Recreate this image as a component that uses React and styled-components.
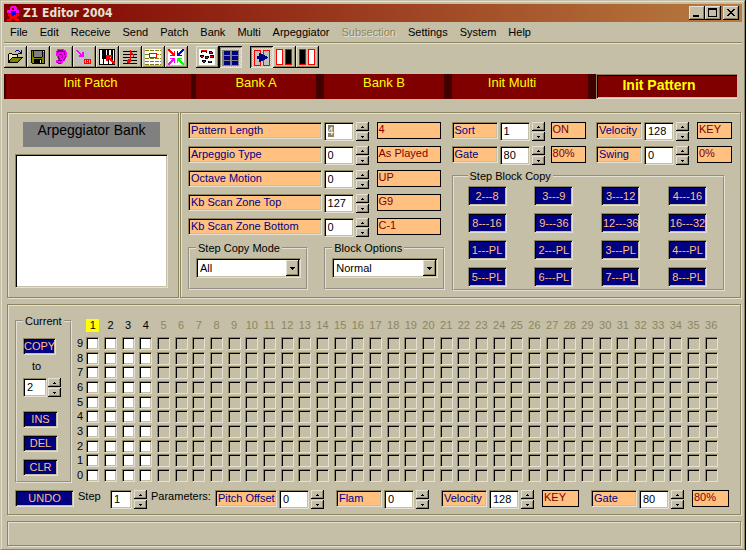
/**
 *
 * Z1 Editor - arpeggio pattern page
 *
 */

import React, { useEffect, useRef, useState } from 'react';
import styled, { createGlobalStyle, css } from 'styled-components';

const face = '#c4bfa6';
const light = '#e4e1d2';
const shadow = '#8c8660';
const peach = '#ffc080';
const navy = '#000080';
const maroon = '#800000';

const GlobalStyle = createGlobalStyle`
  * {
    box-sizing: border-box;
  }
  body {
    margin: 0;
    background: ${face};
    font-family: 'Liberation Sans', Arial, sans-serif;
    font-size: 11px;
    line-height: 13px;
    color: #000;
  }
  button, input, select {
    font: inherit;
    color: inherit;
    margin: 0;
    padding: 0;
    border: 0;
    border-radius: 0;
    outline: none;
  }
`;

const sunken = css`
  border: 1px solid;
  border-color: ${shadow} ${light} ${light} ${shadow};
  box-shadow: inset 1px 1px 0 #000, inset -1px -1px 0 ${face};
`;

const raised = css`
  background: ${face};
  box-shadow: inset -1px -1px 0 #000, inset 1px 1px 0 ${light},
    inset -2px -2px 0 ${shadow};
`;

const Window = styled.main`
  display: flex;
  flex-direction: column;
  min-height: 100vh;
  padding: 4px 4px 5px;
  background: ${face};
  box-shadow: inset -1px -1px 0 #000, inset 1px 1px 0 ${face},
    inset -2px -2px 0 ${shadow}, inset 2px 2px 0 ${light};
`;

const TitleBar = styled.header`
  display: flex;
  align-items: center;
  height: 18px;
  padding: 0 3px 0 2px;
  background: linear-gradient(to right, ${maroon}, #b87c40);
`;

const Title = styled.h1`
  flex: 1;
  margin: 0 0 0 3px;
  font: bold 12px/18px 'DejaVu Sans Condensed', 'DejaVu Sans', sans-serif;
  color: ${light};
`;

const WindowButton = styled.button`
  ${raised}
  width: 16px;
  height: 14px;
  margin-left: ${props => (props.$apart ? 2 : 0)}px;
  svg {
    display: block;
  }
`;

const MenuBar = styled.nav`
  display: flex;
  height: 22px;
  border-bottom: 1px solid ${light};
  box-shadow: inset 0 -1px 0 ${shadow};
`;

const MenuItem = styled.button`
  height: 20px;
  padding: 0 6px;
  background: none;
  &:disabled {
    color: ${shadow};
    text-shadow: 1px 1px 0 ${light};
  }
`;

const Toolbar = styled.div`
  display: flex;
  gap: 8px;
  padding: 2px 0 6px;
`;

const ToolGroup = styled.div`
  display: flex;
`;

const ToolButton = styled.button`
  ${raised}
  width: 23px;
  height: 22px;
  ${props =>
    props.$pressed &&
    css`
      background: repeating-conic-gradient(${light} 0 25%, ${face} 0 50%) 0 0 /
        2px 2px;
      box-shadow: inset 1px 1px 0 #000, inset -1px -1px 0 ${light},
        inset 2px 2px 0 ${shadow};
    `}
  svg {
    display: block;
  }
`;

const Tabs = styled.div`
  display: grid;
  grid-template-columns: 190fr 128fr 128fr 144fr 141fr;
  height: 25px;
  margin-right: 5px;
  padding-left: 2px;
  background: #400000;
`;

const Tab = styled.button`
  padding: 0 ${props => (props.$wide ? 16 : 0)}px 8px 0;
  font-size: 13px;
  line-height: 17px;
  color: #ff0;
  background: ${maroon};
  border-right: ${props => props.$edge || 8}px solid #400000;
  ${props =>
    props.$active &&
    css`
      padding-bottom: 2px;
      font-size: 14px;
      font-weight: bold;
      border: solid;
      border-width: 1px 0 1px 1px;
      border-color: ${shadow} ${light} ${light} ${shadow};
      box-shadow: inset 1px 1px 0 #000, inset 0 -1px 0 ${face};
    `}
`;

const Page = styled.div`
  display: flex;
  flex: 1;
  flex-direction: column;
  gap: 6px;
  padding: 13px 1px 0 3px;
`;

const TopRow = styled.div`
  display: flex;
  gap: 1px;
`;

const Panel = styled.section`
  border: 1px solid ${shadow};
  box-shadow: 1px 1px 0 ${light}, inset 1px 1px 0 ${light};
`;

const BankPanel = styled(Panel)`
  display: flex;
  flex-direction: column;
  flex: 0 0 172px;
  gap: 7px;
  padding: 9px 10px 9px 7px;
`;

const BankTitle = styled.h2`
  height: 25px;
  margin: 0 8px;
  font-size: 14px;
  font-weight: normal;
  line-height: 17px;
  text-align: center;
  background: #808080;
`;

const BankList = styled.select`
  ${sunken}
  flex: 1;
  background: #fff;
`;

const PatternPanel = styled(Panel)`
  display: flex;
  flex: 1;
  gap: 7px;
  padding: 9px 8px 6px 7px;
`;

const PatternColumn = styled.div`
  display: flex;
  flex-direction: column;
  flex: 257 1 0;
  gap: 5px;
`;

const FieldList = styled.div`
  display: flex;
  flex-direction: column;
  gap: 5px;
  padding-right: 4px;
`;

const BlockColumn = styled.div`
  display: flex;
  flex-direction: column;
  flex: 281 1 0;
  gap: 5px;
`;

const FieldRow = styled.div`
  display: flex;
  justify-content: space-between;
`;

const FieldBox = styled.div`
  display: flex;
  align-items: flex-start;
  gap: 2px;
`;

const FieldLabel = styled.label`
  ${sunken}
  flex: ${props => (props.$width ? `0 0 ${props.$width}px` : 1)};
  height: 17px;
  padding: 1px 0 0 2px;
  white-space: nowrap;
  color: ${navy};
  background: ${peach};
`;

const NumberInput = styled.input`
  ${sunken}
  width: ${props => props.$width || 30}px;
  height: 19px;
  padding: 0 0 1px 3px;
  background: #fff;
  &::selection {
    color: #fff;
    background: ${shadow};
  }
`;

const Spinner = styled.span`
  display: flex;
  flex-direction: column;
  gap: 1px;
  width: 13px;
`;

const SpinButton = styled.button`
  ${raised}
  height: 9px;
  svg {
    display: block;
    margin: 0 auto;
  }
`;

const Readout = styled.output`
  width: ${props => props.$width}px;
  height: 17px;
  margin-left: ${props => props.$gap}px;
  padding: 0 1px;
  white-space: nowrap;
  color: ${maroon};
  background: ${peach};
  border: 1px solid #000;
`;

const GroupRow = styled.div`
  display: flex;
  gap: 16px;
`;

const Group = styled.fieldset`
  min-width: 0;
  margin: 0;
  padding: ${props => props.$pad};
  border: 2px groove ${light};
`;

const ChoiceGroup = styled(Group)`
  flex: 1;
`;

const BlockGroup = styled(Group)`
  margin-right: 7px;
`;

const Legend = styled.legend`
  height: 12px;
  padding: 0 2px;
  line-height: 12px;
  white-space: nowrap;
`;

const SelectBox = styled.div`
  ${sunken}
  display: flex;
  height: 20px;
  padding: 1px;
  background: #fff;
`;

const Select = styled.select`
  flex: 1;
  min-width: 0;
  padding-left: 2px;
  appearance: none;
  background: #fff;
`;

const SelectArrow = styled.span`
  ${raised}
  display: flex;
  align-items: center;
  justify-content: center;
  width: 13px;
`;

const BlockButtons = styled.div`
  display: grid;
  grid-template-columns: repeat(4, 39px);
  justify-content: space-between;
  row-gap: 7px;
`;

const BlueButton = styled.button`
  ${sunken}
  width: ${props => (props.$width ? `${props.$width}px` : 'auto')};
  height: ${props => props.$height || 17}px;
  line-height: 13px;
  white-space: nowrap;
  color: ${peach};
  background: ${navy};
`;

const StepPanel = styled(Panel)`
  display: flex;
  flex-direction: column;
  gap: 7px;
  min-height: 211px;
  padding: 10px 11px 3px 7px;
`;

const StepArea = styled.div`
  display: flex;
  gap: 4px;
`;

const CurrentGroup = styled(Group)`
  flex: 0 0 57px;
`;

const CurrentStack = styled.div`
  display: flex;
  flex-direction: column;
  align-items: flex-start;
  gap: 7px;
`;

const ToText = styled.span`
  margin: -2px 0 -2px 9px;
`;

const CurrentNumber = styled.div`
  display: flex;
  gap: 1px;
  margin-bottom: 7px;
`;

const StepGrid = styled.div`
  display: grid;
  flex: 1;
  grid-template-columns: 8px repeat(36, 1fr);
  grid-template-rows: 21px repeat(10, 1fr);
  align-items: center;
  justify-items: center;
  margin-right: 9px;
`;

const StepNumber = styled.span`
  min-width: 13px;
  text-align: center;
  color: ${props => (props.$enabled ? '#000' : shadow)};
  background: ${props => (props.$current ? '#ff0' : 'none')};
`;

const StepBox = styled.input`
  ${sunken}
  appearance: none;
  width: 13px;
  height: 13px;
  background: #fff;
  &:checked {
    background: ${navy};
  }
  &:disabled {
    background: ${face};
  }
`;

const ParameterRow = styled.div`
  display: flex;
  align-items: flex-start;
  justify-content: space-between;
`;

const StepParameters = styled.div`
  display: flex;
  align-items: flex-start;
  gap: 4px;
`;

const StepChooser = styled.div`
  display: flex;
  gap: 2px;
`;

const StepLabel = styled.label`
  width: 30px;
`;

const StatusBar = styled.footer`
  height: 25px;
  border: 1px solid ${shadow};
  box-shadow: 1px 1px 0 ${light}, inset 1px 1px 0 ${light};
`;

function Logo() {
  return (
    <svg width="14" height="17" shapeRendering="crispEdges" aria-hidden="true">
      <path
        d="M4 1h6v1h1v3h2v3h-3v-2h-5v2h-4v-3h3v-3h1zM6 3v2h2v-2z"
        fill="#f0f"
        fillRule="evenodd"
      />
      <path d="M5 6h5v2h-1v2h-3v-2h-1z" fill="#00f" />
      <path
        d="M2 9h3v1h1v1h2v-1h2v-1h3v2h-2v1h-1v1h1v1h2v2h-4v-1h-1v-1h-2v1h-1v1h-4v-2h2v-1h1v-1h-1v-1h-1z"
        fill="#f00"
      />
    </svg>
  );
}

function MinimizeIcon() {
  return (
    <svg width="16" height="14" shapeRendering="crispEdges">
      <path d="M4 9h6v2h-6z" />
    </svg>
  );
}

function MaximizeIcon() {
  return (
    <svg width="16" height="14" shapeRendering="crispEdges">
      <path d="M3 2h9v9h-9zM4 4v6h7v-6z" fillRule="evenodd" />
    </svg>
  );
}

function CloseIcon() {
  return (
    <svg width="16" height="14" shapeRendering="crispEdges">
      <path d="M4 3h2v1h1v1h2v-1h1v-1h2v1h-1v1h-1v1h-1v1h1v1h1v1h1v1h-2v-1h-1v-1h-2v1h-1v1h-2v-1h1v-1h1v-1h1v-1h-1v-1h-1v-1h-1z" />
    </svg>
  );
}

function UpIcon() {
  return (
    <svg width="3" height="2" shapeRendering="crispEdges">
      <path d="M1 0h1v1h1v1h-3v-1h1z" />
    </svg>
  );
}

function DownIcon() {
  return (
    <svg width="3" height="2" shapeRendering="crispEdges">
      <path d="M0 0h3v1h-1v1h-1v-1h-1z" />
    </svg>
  );
}

function ToolIcon({ children }) {
  return (
    <svg width="23" height="22" shapeRendering="crispEdges" aria-hidden="true">
      {children}
    </svg>
  );
}

const icons = {
  open: (
    <>
      <path d="M4 8h1v-1h3v1h6v3h5v1h-1v1h-1v1h-1v1h-1v1h-1v1h-10z" />
      <path d="M5 8h3v1h5v2h-5v1h-1v1h-1v1h-1z" fill="#e8e4b0" />
      <path d="M8 12h9v1h-1v1h-1v1h-1v1h-8v-2h1v-1h1z" fill="#808000" />
      <path
        d="M11 5h1v-1h3v1h1v1h1v-2h1v4h-4v-1h2v-1h-1v-1h-3v1h-1z"
        fill={navy}
      />
    </>
  ),
  save: (
    <>
      <path d="M4 4h14v14h-13v-1h-1z" />
      <path d="M5 5h1v6h1v1h8v-1h1v-5h1v11h-2v-4h-8v4h-2z" fill="#808000" />
      <path d="M7 5h8v6h-8z" fill="#808080" />
      <path d="M13 14h1v3h-1z" fill={light} />
      <path d="M16 5h1v1h-1z" fill={light} />
    </>
  ),
  ear: (
    <>
      <path
        d="M7 3h7v1h2v2h1v5h-1v2h-1v2h-2v2h-1v1h-4v-1h-2v-3h2v-2h-1v-2h-1v-5h1z"
        fill="#f0f"
      />
      <path
        d="M7 5h1v-1h5v1h2v4h-1v-3h-6v2h-1zM9 8h3v1h1v3h-2v-1h1v-2h-3zM8 10h1v2h1v2h2v1h-4v-1h1v-1h-1zM15 10h1v2h-1v2h-1v1h-1v-2h1v-1h1z"
        fill="#800080"
      />
      <path d="M7 16h1v1h3v1h-3v-1h-1z" fill={navy} />
    </>
  ),
  receive: (
    <>
      <path d="M3 3h16v16h-16z" fill="#c0c0c0" />
      <path
        d="M3 4h2v1h1v1h1v1h1v1h1v-2h2v5h-5v-2h1v-1h-1v-1h-1v-1h-1v-1h-1z"
        fill="#f0f"
      />
      <path d="M11 13h7v5h-7zM12 14v3h5v-3z" fill="#f00" fillRule="evenodd" />
      <path d="M13 14h1v1h1v-1h1v3h-1v-1h-1v1h-1z" fill="#f00" />
    </>
  ),
  keys: (
    <>
      <path d="M3 3h16v16h-16z" />
      <path
        d="M4 4h2v9h1v5h-3zM8 13h2v-9h1v9h1v5h-4zM13 13v-9h2v9h1v5h-3zM17 4h1v14h-1z"
        fill="#fff"
      />
      <path
        d="M10 9h6v2h-2v1h1v1h1v1h1v1h1v1h1v2h-2v-1h-1v-1h-1v-1h-1v-1h-1v-1h-1v2h-2z"
        fill="#f00"
      />
    </>
  ),
  notes: (
    <>
      <path d="M4 5h14v1h-14zM4 8h14v1h-14zM4 11h14v1h-14zM4 14h14v1h-14zM4 17h14v1h-14z" />
      <path
        d="M11 4h1v2h1v1h1v1h1v3h-1v-2h-1v-1h-1v8h-1v1h-3v-3h1v-1h2z"
        fill="#f00"
      />
    </>
  ),
  sheet: (
    <>
      <path d="M3 3h16v16h-16z" fill="#fff" />
      <path
        d="M3 4h16M3 8h16M3 12h16M3 15h16M3 18h16"
        transform="translate(0 .5)"
        stroke="#808000"
        strokeDasharray="4 1"
      />
      <path d="M7 7h8v5h-8z" fill="#f00" />
      <path d="M8 8h6v3h-6z" fill="#fff" />
    </>
  ),
  center: (
    <>
      <path d="M3 3h16v16h-16z" fill="#fff" />
      <path
        d="M3 3h2v1h1v1h1v1h1v1h1v-2h1v5h-5v-1h2v-1h-1v-1h-1v-1h-1v-1h-1z"
        fill="#f00"
      />
      <path
        d="M19 3h-2v1h-1v1h-1v1h-1v1h-1v-2h-1v5h5v-1h-2v-1h1v-1h1v-1h1v-1h1z"
        fill="#00f"
      />
      <path
        d="M3 19h2v-1h1v-1h1v-1h1v-1h1v2h1v-5h-5v1h2v1h-1v1h-1v1h-1v1h-1z"
        fill="#f0f"
      />
      <path
        d="M19 19h-2v-1h-1v-1h-1v-1h-1v-1h-1v2h-1v-5h5v1h-2v1h1v1h1v1h1v1h1z"
        fill="#0f0"
      />
    </>
  ),
  midi: (
    <>
      <path d="M3 3h16v16h-16z" fill="#fff" />
      <path d="M5 4h6v3h-1v-1h-4v1h-1zM13 5h3v1h1v2h-4zM4 9h4v2h-1v1h-2v-1h-1zM9 10h4v2h-1v1h-3zM14 9h4v3h-4zM6 14h4v2h-1v1h-2v-1h-1zM12 15h4v2h-4z" />
      <path
        d="M5 4h6v1h-6zM5 10h2v1h-2zM14 10h3v1h-3zM7 15h2v1h-2zM13 15h2v1h-2z"
        fill="#f00"
      />
      <path d="M14 6h2v1h-2zM10 11h2v1h-2z" fill="#c000a0" />
    </>
  ),
  bank: (
    <>
      <path d="M3 4h17v16h-17z" fill="#808080" />
      <path
        d="M5 5h6v4h-6zM13 5h6v4h-6zM5 10h6v4h-6zM13 10h6v4h-6zM5 15h6v4h-6zM13 15h6v4h-6z"
        fill={navy}
      />
    </>
  ),
  play: (
    <>
      <path d="M4 4h7v16h-7zM13 4h7v16h-7z" fill="#f00" />
      <path d="M5 5h5v14h-5zM14 5h5v14h-5z" fill="#c0c0c0" />
      <path
        d="M9 7h2v1h2v1h2v1h2v1h1v1h-1v1h-2v1h-2v1h-2v1h-2v-3h-2v-3h2z"
        fill={navy}
      />
    </>
  ),
  left: (
    <>
      <path d="M3 3h7v16h-7zM12 3h7v16h-7z" fill="#f00" />
      <path d="M4 4h5v14h-5z" fill="#fff" />
      <path d="M13 4h5v14h-5z" />
    </>
  ),
  right: (
    <>
      <path d="M3 3h7v16h-7zM12 3h7v16h-7z" fill="#f00" />
      <path d="M4 4h5v14h-5z" />
      <path d="M13 4h5v14h-5z" fill="#fff" />
    </>
  ),
};

const toolGroups = [
  ['open', 'save', 'ear', 'receive', 'keys', 'notes', 'sheet', 'center'],
  ['midi', 'bank'],
  ['play', 'left', 'right'],
];
const pressedTools = ['bank', 'play'];

const menus = [
  'File',
  'Edit',
  'Receive',
  'Send',
  'Patch',
  'Bank',
  'Multi',
  'Arpeggiator',
  'Subsection',
  'Settings',
  'System',
  'Help',
];

const patternFields = [
  { label: 'Pattern Length', value: '4', readout: '4', selected: true },
  { label: 'Arpeggio Type', value: '0', readout: 'As Played' },
  { label: 'Octave Motion', value: '0', readout: 'UP' },
  { label: 'Kb Scan Zone Top', value: '127', readout: 'G9' },
  { label: 'Kb Scan Zone Bottom', value: '0', readout: 'C-1' },
];

const blocks = [
  '2---8',
  '3---9',
  '3---12',
  '4---16',
  '8---16',
  '9---36',
  '12---36',
  '16---32',
  '1---PL',
  '2---PL',
  '3---PL',
  '4---PL',
  '5---PL',
  '6---PL',
  '7---PL',
  '8---PL',
];

const PATTERN_LENGTH = 4;
const steps = Array.from({ length: 36 }, (_, i) => i + 1);
const tones = [9, 8, 7, 6, 5, 4, 3, 2, 1, 0];

function Stepper({ id, name, initial, width, selected }) {
  const [value, setValue] = useState(initial);
  const input = useRef(null);

  useEffect(() => {
    if (selected) {
      input.current.focus();
      input.current.select();
    }
  }, [selected]);

  const change = by => setValue(String(Math.max(0, Number(value) + by)));

  return (
    <>
      <NumberInput
        id={id}
        ref={input}
        aria-label={name}
        $width={width}
        value={value}
        onChange={e => setValue(e.target.value)}
      />
      <Spinner>
        <SpinButton aria-label={`${name} up`} onClick={() => change(1)}>
          <UpIcon />
        </SpinButton>
        <SpinButton aria-label={`${name} down`} onClick={() => change(-1)}>
          <DownIcon />
        </SpinButton>
      </Spinner>
    </>
  );
}

function Field({
  id,
  label,
  value,
  readout,
  labelWidth,
  readoutWidth = 35,
  readoutGap = 6,
  selected,
}) {
  return (
    <FieldBox>
      <FieldLabel htmlFor={id} $width={labelWidth}>
        {label}
      </FieldLabel>
      <Stepper id={id} name={label} initial={value} selected={selected} />
      {readout && (
        <Readout htmlFor={id} $width={readoutWidth} $gap={readoutGap}>
          {readout}
        </Readout>
      )}
    </FieldBox>
  );
}

function Choice({ legend, options }) {
  return (
    <ChoiceGroup $pad="4px 5px 10px 6px">
      <Legend>{legend}</Legend>
      <SelectBox>
        <Select aria-label={legend}>
          {options.map(option => (
            <option key={option}>{option}</option>
          ))}
        </Select>
        <SelectArrow>
          <svg width="5" height="3" shapeRendering="crispEdges">
            <path d="M0 0h5v1h-1v1h-1v1h-1v-1h-1v-1h-1z" />
          </svg>
        </SelectArrow>
      </SelectBox>
    </ChoiceGroup>
  );
}

function Steps() {
  return (
    <StepGrid>
      <span />
      {steps.map(step => (
        <StepNumber
          key={step}
          $enabled={step <= PATTERN_LENGTH}
          $current={step === 1}
        >
          {step}
        </StepNumber>
      ))}
      {tones.map(tone => (
        <React.Fragment key={tone}>
          <span>{tone}</span>
          {steps.map(step => (
            <StepBox
              key={step}
              type="checkbox"
              aria-label={`Step ${step}, tone ${tone}`}
              disabled={step > PATTERN_LENGTH}
            />
          ))}
        </React.Fragment>
      ))}
    </StepGrid>
  );
}

export default function App() {
  return (
    <Window>
      <GlobalStyle />
      <TitleBar>
        <Logo />
        <Title>Z1 Editor 2004</Title>
        <WindowButton aria-label="Minimize">
          <MinimizeIcon />
        </WindowButton>
        <WindowButton aria-label="Maximize">
          <MaximizeIcon />
        </WindowButton>
        <WindowButton aria-label="Close" $apart>
          <CloseIcon />
        </WindowButton>
      </TitleBar>
      <MenuBar>
        {menus.map(menu => (
          <MenuItem key={menu} disabled={menu === 'Subsection'}>
            {menu}
          </MenuItem>
        ))}
      </MenuBar>
      <Toolbar>
        {toolGroups.map(group => (
          <ToolGroup key={group[0]}>
            {group.map(tool => (
              <ToolButton
                key={tool}
                aria-label={tool}
                $pressed={pressedTools.includes(tool)}
              >
                <ToolIcon>{icons[tool]}</ToolIcon>
              </ToolButton>
            ))}
          </ToolGroup>
        ))}
      </Toolbar>
      <Tabs>
        <Tab $wide $edge={5}>
          Init Patch
        </Tab>
        <Tab>Bank A</Tab>
        <Tab>Bank B</Tab>
        <Tab $wide>Init Multi</Tab>
        <Tab $wide $active>
          Init Pattern
        </Tab>
      </Tabs>
      <Page>
        <TopRow>
          <BankPanel>
            <BankTitle>Arpeggiator Bank</BankTitle>
            <BankList multiple aria-label="Arpeggiator Bank" />
          </BankPanel>
          <PatternPanel>
            <PatternColumn>
              <FieldList>
                {patternFields.map(field => (
                  <Field
                    key={field.label}
                    id={field.label.toLowerCase().replace(/ /g, '-')}
                    readoutWidth={64}
                    {...field}
                  />
                ))}
              </FieldList>
              <GroupRow>
                <Choice legend="Step Copy Mode" options={['All']} />
                <Choice legend="Block Options" options={['Normal']} />
              </GroupRow>
            </PatternColumn>
            <BlockColumn>
              <FieldRow>
                <Field
                  id="sort"
                  label="Sort"
                  value="1"
                  readout="ON"
                  labelWidth={46}
                  readoutGap={4}
                />
                <Field
                  id="velocity"
                  label="Velocity"
                  value="128"
                  readout="KEY"
                  labelWidth={46}
                />
              </FieldRow>
              <FieldRow>
                <Field
                  id="gate"
                  label="Gate"
                  value="80"
                  readout="80%"
                  labelWidth={46}
                  readoutGap={4}
                />
                <Field
                  id="swing"
                  label="Swing"
                  value="0"
                  readout="0%"
                  labelWidth={46}
                />
              </FieldRow>
              <BlockGroup $pad="4px 16px 2px 14px">
                <Legend>Step Block Copy</Legend>
                <BlockButtons>
                  {blocks.map(block => (
                    <BlueButton key={block} $height={20}>
                      {block}
                    </BlueButton>
                  ))}
                </BlockButtons>
              </BlockGroup>
            </BlockColumn>
          </PatternPanel>
        </TopRow>
        <StepPanel>
          <StepArea>
            <CurrentGroup $pad="11px 0 5px 6px">
              <Legend>Current</Legend>
              <CurrentStack>
                <BlueButton $width={33}>COPY</BlueButton>
                <ToText>to</ToText>
                <CurrentNumber>
                  <Stepper id="copy-to" name="Copy to" initial="2" width={24} />
                </CurrentNumber>
                <BlueButton $width={35}>INS</BlueButton>
                <BlueButton $width={35}>DEL</BlueButton>
                <BlueButton $width={35}>CLR</BlueButton>
              </CurrentStack>
            </CurrentGroup>
            <Steps />
          </StepArea>
          <ParameterRow>
            <StepParameters>
              <BlueButton $width={59}>UNDO</BlueButton>
              <StepChooser>
                <StepLabel htmlFor="step">Step</StepLabel>
                <Stepper id="step" name="Step" initial="1" width={22} />
              </StepChooser>
              <span>Parameters:</span>
              <Field
                id="pitch-offset"
                label="Pitch Offset"
                value="0"
                labelWidth={62}
              />
            </StepParameters>
            <Field id="flam" label="Flam" value="0" labelWidth={46} />
            <Field
              id="step-velocity"
              label="Velocity"
              value="128"
              readout="KEY"
              labelWidth={46}
              readoutWidth={37}
            />
            <Field
              id="step-gate"
              label="Gate"
              value="80"
              readout="80%"
              labelWidth={46}
              readoutWidth={37}
            />
          </ParameterRow>
        </StepPanel>
        <StatusBar />
      </Page>
    </Window>
  );
}
